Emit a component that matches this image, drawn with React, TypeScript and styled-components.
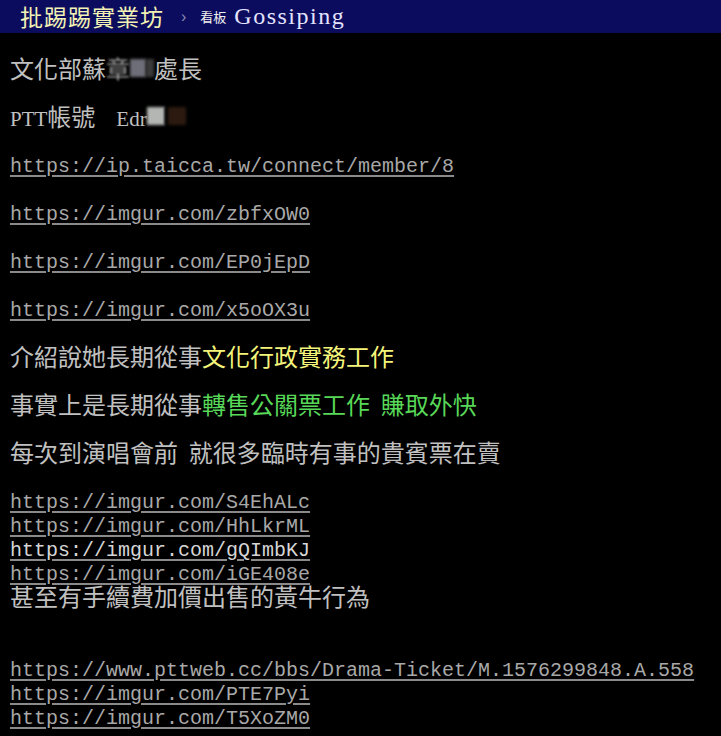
import React from "react";
import styled, { createGlobalStyle } from "styled-components";

const GlobalStyle = createGlobalStyle`
  html, body {
    margin: 0;
    padding: 0;
    background: #000;
  }
  body {
    font-family: "Noto Sans CJK TC", "Liberation Serif", serif;
    overflow: hidden;
  }
`;

type Tone = "plain" | "yellow" | "green";

const toneColor: Record<Tone, string> = {
  plain: "#c0c0c0",
  yellow: "#f4f47a",
  green: "#58d858",
};

const Page = styled.div`
  width: 721px;
  min-height: 736px;
  background: #000;
`;

const Topbar = styled.div`
  height: 33px;
  background: #0c0c5e;
  display: flex;
  align-items: center;
  padding-left: 20px;
  box-sizing: border-box;
`;

const Logo = styled.span`
  font-family: "Noto Sans CJK TC", sans-serif;
  font-size: 23px;
  line-height: 33px;
  color: #f2f2b4;
  letter-spacing: 1px;
`;

const Caret = styled.span`
  font-family: "Liberation Sans", sans-serif;
  font-size: 16px;
  color: #8a8ab4;
  margin: 0 14px 0 17px;
`;

const BoardLabel = styled.span`
  font-family: "Noto Sans CJK TC", sans-serif;
  font-size: 13px;
  color: #f0f0f0;
  margin-right: 8px;
`;

const BoardName = styled.span`
  font-family: "Liberation Serif", serif;
  font-size: 24px;
  color: #e4e4ff;
  letter-spacing: 1.5px;
`;

const Screen = styled.div`
  padding: 23px 0 0 10px;
  display: flex;
  flex-direction: column;
`;

const Line = styled.div<{ $gap?: boolean }>`
  height: 24px;
  line-height: 24px;
  font-size: 24px;
  white-space: pre;
  color: ${toneColor.plain};
  margin-bottom: ${({ $gap }) => ($gap ? "24px" : "0")};
`;

const Span = styled.span<{ $tone: Tone }>`
  color: ${({ $tone }) => toneColor[$tone]};
`;

const Roman = styled.span`
  font-family: "Liberation Serif", serif;
  font-size: 21px;
`;

const Link = styled.a<{ $bright?: boolean }>`
  font-family: "Liberation Mono", monospace;
  font-size: 20px;
  vertical-align: 2px;
  color: ${({ $bright }) => ($bright ? "#d6d6d6" : "#a8a8a8")};
  text-decoration: underline;
  text-decoration-color: #8a8a8a;
  text-underline-offset: 3px;
  text-decoration-thickness: 2px;
`;

const Smudge = styled.span`
  display: inline-flex;
  align-items: center;
  height: 24px;
  vertical-align: top;
`;

const Blob = styled.span<{ $w: number; $h: number; $c: string }>`
  display: inline-block;
  width: ${({ $w }) => $w}px;
  height: ${({ $h }) => $h}px;
  background: ${({ $c }) => $c};
  filter: blur(1.5px);
`;

const Faded = styled.span`
  filter: blur(1.2px);
  opacity: 0.8;
`;

type Item =
  | { kind: "link"; href: string; gap?: boolean; bright?: boolean }
  | { kind: "text"; parts: [Tone, string][]; gap?: boolean }
  | { kind: "blank" };

const body: Item[] = [
  { kind: "link", href: "https://ip.taicca.tw/connect/member/8", gap: true },
  { kind: "link", href: "https://imgur.com/zbfxOW0", gap: true },
  { kind: "link", href: "https://imgur.com/EP0jEpD", gap: true },
  { kind: "link", href: "https://imgur.com/x5oOX3u", gap: true },
  { kind: "text", parts: [["plain", "介紹說她長期從事"], ["yellow", "文化行政實務工作"]], gap: true },
  { kind: "text", parts: [["plain", "事實上是長期從事"], ["green", "轉售公關票工作  賺取外快"]], gap: true },
  { kind: "text", parts: [["plain", "每次到演唱會前  就很多臨時有事的貴賓票在賣"]], gap: true },
  { kind: "link", href: "https://imgur.com/S4EhALc" },
  { kind: "link", href: "https://imgur.com/HhLkrML" },
  { kind: "link", href: "https://imgur.com/gQImbKJ", bright: true },
  { kind: "link", href: "https://imgur.com/iGE408e" },
  { kind: "text", parts: [["plain", "甚至有手續費加價出售的黃牛行為"]] },
  { kind: "blank" },
  { kind: "blank" },
  { kind: "link", href: "https://www.pttweb.cc/bbs/Drama-Ticket/M.1576299848.A.558" },
  { kind: "link", href: "https://imgur.com/PTE7Pyi" },
  { kind: "link", href: "https://imgur.com/T5XoZM0" },
];

export default function App() {
  return (
    <Page>
      <GlobalStyle />
      <Topbar>
        <Logo>批踢踢實業坊</Logo>
        <Caret>›</Caret>
        <BoardLabel>看板</BoardLabel>
        <BoardName>Gossiping</BoardName>
      </Topbar>
      <Screen>
        <Line $gap>
          文化部蘇
          <Faded>章</Faded>
          <Smudge>
            <Blob $w={16} $h={18} $c="#6e6e78" />
            <Blob $w={8} $h={18} $c="#3a3a3a" />
          </Smudge>
          處長
        </Line>
        <Line $gap>
          <Roman>PTT</Roman>帳號<Roman>    Edr</Roman>
          <Smudge>
            <Blob $w={18} $h={18} $c="#b4b6b4" />
            <Blob $w={3} $h={18} $c="#000" />
            <Blob $w={18} $h={18} $c="#2c1a10" />
          </Smudge>
        </Line>
        {body.map((item, i) => {
          if (item.kind === "blank") return <Line key={i} />;
          if (item.kind === "link")
            return (
              <Line key={i} $gap={item.gap}>
                <Link href={item.href} $bright={item.bright}>
                  {item.href}
                </Link>
              </Line>
            );
          return (
            <Line key={i} $gap={item.gap}>
              {item.parts.map(([tone, text], j) => (
                <Span key={j} $tone={tone}>
                  {text}
                </Span>
              ))}
            </Line>
          );
        })}
      </Screen>
    </Page>
  );
}
